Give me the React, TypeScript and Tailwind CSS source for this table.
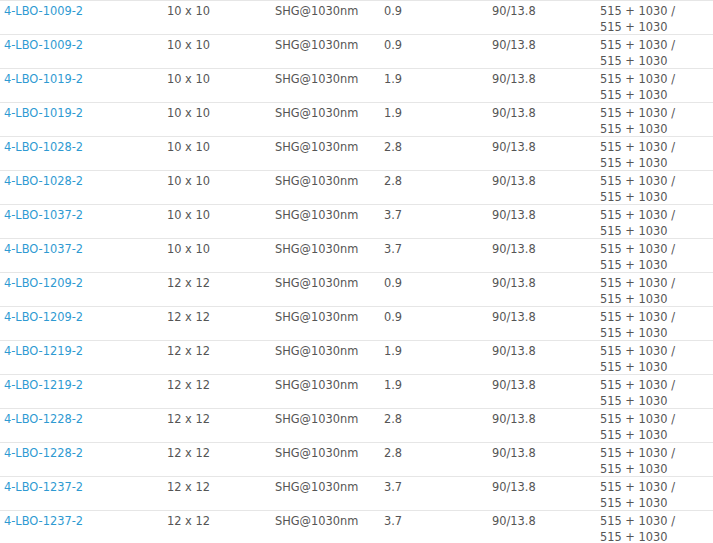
import React from "react";

const rows: [string, string, string][] = [
  ["4-LBO-1009-2", "10 x 10", "0.9"],
  ["4-LBO-1009-2", "10 x 10", "0.9"],
  ["4-LBO-1019-2", "10 x 10", "1.9"],
  ["4-LBO-1019-2", "10 x 10", "1.9"],
  ["4-LBO-1028-2", "10 x 10", "2.8"],
  ["4-LBO-1028-2", "10 x 10", "2.8"],
  ["4-LBO-1037-2", "10 x 10", "3.7"],
  ["4-LBO-1037-2", "10 x 10", "3.7"],
  ["4-LBO-1209-2", "12 x 12", "0.9"],
  ["4-LBO-1209-2", "12 x 12", "0.9"],
  ["4-LBO-1219-2", "12 x 12", "1.9"],
  ["4-LBO-1219-2", "12 x 12", "1.9"],
  ["4-LBO-1228-2", "12 x 12", "2.8"],
  ["4-LBO-1228-2", "12 x 12", "2.8"],
  ["4-LBO-1237-2", "12 x 12", "3.7"],
  ["4-LBO-1237-2", "12 x 12", "3.7"],
];

export default function App() {
  return (
    <div
      className="w-[713px] h-[543px] overflow-hidden bg-white text-[11.4px] leading-[16px] text-[#555555]"
      style={{ fontFamily: "Verdana, 'DejaVu Sans', sans-serif" }}
    >
      {rows.map((r, i) => (
        <div
          key={i}
          className="grid grid-cols-[163px_108px_109px_108px_108px_1fr] h-[34px] border-t border-[#e6e6e6] pt-[2px]"
        >
          <div className="pl-[4px]">
            <a className="text-[#2e9ad2]">{r[0]}</a>
          </div>
          <div className="pl-[4px]">{r[1]}</div>
          <div className="pl-[4px]">SHG@1030nm</div>
          <div className="pl-[4px]">{r[2]}</div>
          <div className="pl-[4px]">90/13.8</div>
          <div className="pl-[4px] pr-[20px]">515 + 1030 / 515 + 1030</div>
        </div>
      ))}
    </div>
  );
}
